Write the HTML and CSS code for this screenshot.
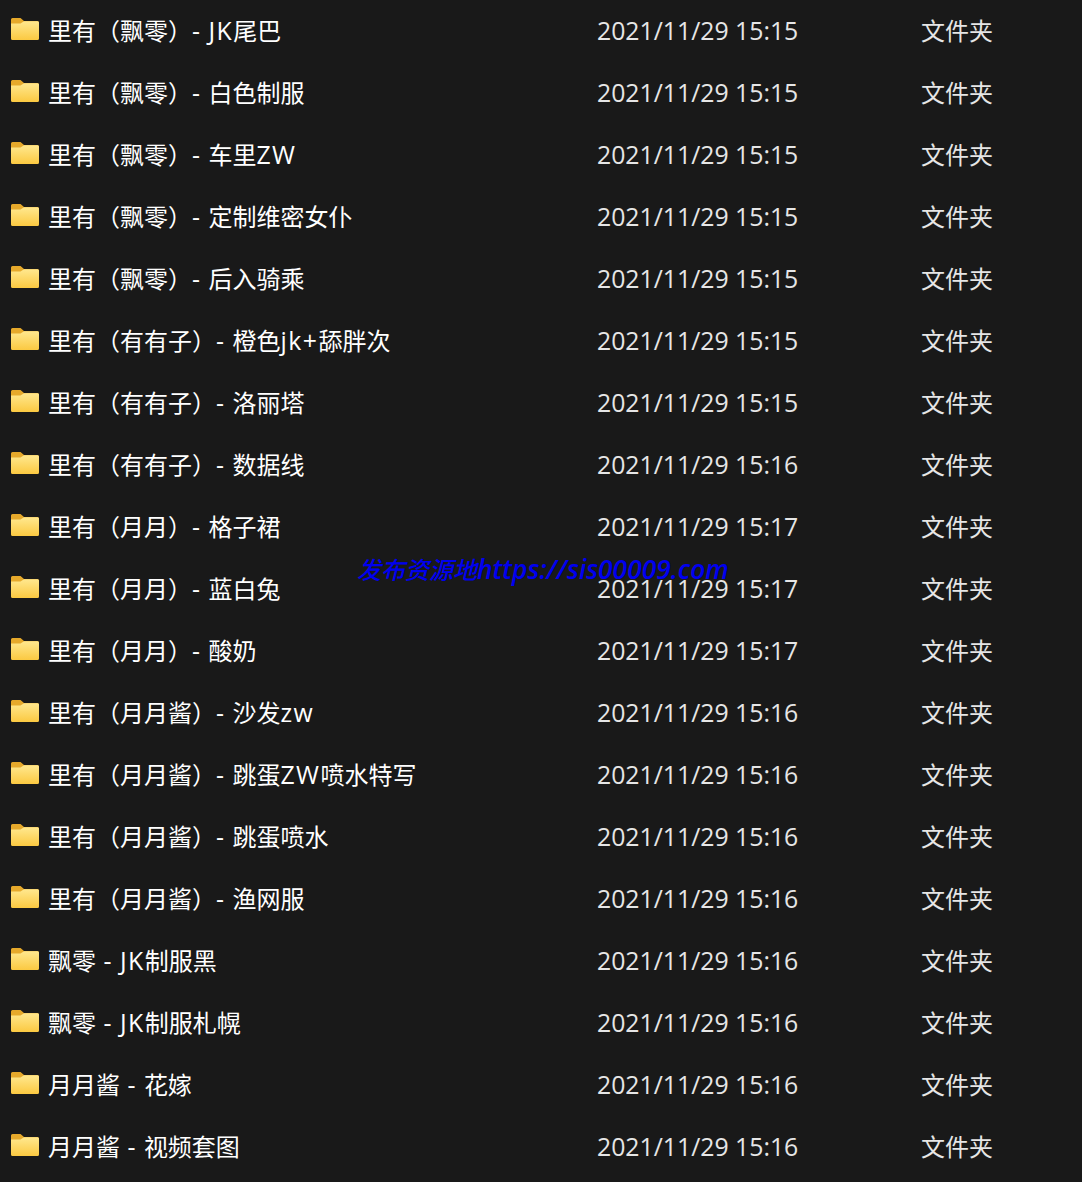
FILE: index.html
```html
<!DOCTYPE html>
<html lang="zh">
<head>
    <meta charset="UTF-8">
    <title>文件夹</title>
    <link rel="stylesheet" href="styles.css">
</head>
<body>
    <svg class="defs" width="0" height="0">
        <defs>
            <linearGradient id="front" x1="0" y1="0" x2="0" y2="1">
                <stop offset="0" stop-color="#ffe88f"/>
                <stop offset="1" stop-color="#fbc941"/>
            </linearGradient>
            <symbol id="folder" viewBox="0 0 28 22">
                <path d="M1.5 0H9.5L13 3H26.5Q28 3 28 4.5V10H0V1.5Q0 0 1.5 0Z" fill="#e6a92b"/>
                <path d="M0 5.5H9.5L13 3.2H26.5Q28 3.2 28 4.7V20.5Q28 22 26.5 22H1.5Q0 22 0 20.5Z" fill="url(#front)"/>
            </symbol>
        </defs>
    </svg>
    <main class="list">
        <div class="row"><span class="name"><svg class="icon"><use href="#folder"/></svg><span>里有（飘零）<span class="lat">- </span><span class="word">JK</span>尾巴</span></span><span class="date">2021/11/29 15:15</span><span class="type">文件夹</span></div>
        <div class="row"><span class="name"><svg class="icon"><use href="#folder"/></svg><span>里有（飘零）<span class="lat">- </span>白色制服</span></span><span class="date">2021/11/29 15:15</span><span class="type">文件夹</span></div>
        <div class="row"><span class="name"><svg class="icon"><use href="#folder"/></svg><span>里有（飘零）<span class="lat">- </span>车里<span class="word">ZW</span></span></span><span class="date">2021/11/29 15:15</span><span class="type">文件夹</span></div>
        <div class="row"><span class="name"><svg class="icon"><use href="#folder"/></svg><span>里有（飘零）<span class="lat">- </span>定制维密女仆</span></span><span class="date">2021/11/29 15:15</span><span class="type">文件夹</span></div>
        <div class="row"><span class="name"><svg class="icon"><use href="#folder"/></svg><span>里有（飘零）<span class="lat">- </span>后入骑乘</span></span><span class="date">2021/11/29 15:15</span><span class="type">文件夹</span></div>
        <div class="row"><span class="name"><svg class="icon"><use href="#folder"/></svg><span>里有（有有子）<span class="lat">- </span>橙色<span class="word">jk+</span>舔胖次</span></span><span class="date">2021/11/29 15:15</span><span class="type">文件夹</span></div>
        <div class="row"><span class="name"><svg class="icon"><use href="#folder"/></svg><span>里有（有有子）<span class="lat">- </span>洛丽塔</span></span><span class="date">2021/11/29 15:15</span><span class="type">文件夹</span></div>
        <div class="row"><span class="name"><svg class="icon"><use href="#folder"/></svg><span>里有（有有子）<span class="lat">- </span>数据线</span></span><span class="date">2021/11/29 15:16</span><span class="type">文件夹</span></div>
        <div class="row"><span class="name"><svg class="icon"><use href="#folder"/></svg><span>里有（月月）<span class="lat">- </span>格子裙</span></span><span class="date">2021/11/29 15:17</span><span class="type">文件夹</span></div>
        <div class="row"><span class="name"><svg class="icon"><use href="#folder"/></svg><span>里有（月月）<span class="lat">- </span>蓝白兔</span></span><span class="date">2021/11/29 15:17</span><span class="type">文件夹</span></div>
        <div class="row"><span class="name"><svg class="icon"><use href="#folder"/></svg><span>里有（月月）<span class="lat">- </span>酸奶</span></span><span class="date">2021/11/29 15:17</span><span class="type">文件夹</span></div>
        <div class="row"><span class="name"><svg class="icon"><use href="#folder"/></svg><span>里有（月月酱）<span class="lat">- </span>沙发<span class="word">zw</span></span></span><span class="date">2021/11/29 15:16</span><span class="type">文件夹</span></div>
        <div class="row"><span class="name"><svg class="icon"><use href="#folder"/></svg><span>里有（月月酱）<span class="lat">- </span>跳蛋<span class="word">ZW</span>喷水特写</span></span><span class="date">2021/11/29 15:16</span><span class="type">文件夹</span></div>
        <div class="row"><span class="name"><svg class="icon"><use href="#folder"/></svg><span>里有（月月酱）<span class="lat">- </span>跳蛋喷水</span></span><span class="date">2021/11/29 15:16</span><span class="type">文件夹</span></div>
        <div class="row"><span class="name"><svg class="icon"><use href="#folder"/></svg><span>里有（月月酱）<span class="lat">- </span>渔网服</span></span><span class="date">2021/11/29 15:16</span><span class="type">文件夹</span></div>
        <div class="row"><span class="name"><svg class="icon"><use href="#folder"/></svg><span>飘零<span class="lat"> - </span><span class="word">JK</span>制服黑</span></span><span class="date">2021/11/29 15:16</span><span class="type">文件夹</span></div>
        <div class="row"><span class="name"><svg class="icon"><use href="#folder"/></svg><span>飘零<span class="lat"> - </span><span class="word">JK</span>制服札幌</span></span><span class="date">2021/11/29 15:16</span><span class="type">文件夹</span></div>
        <div class="row"><span class="name"><svg class="icon"><use href="#folder"/></svg><span>月月酱<span class="lat"> - </span>花嫁</span></span><span class="date">2021/11/29 15:16</span><span class="type">文件夹</span></div>
        <div class="row"><span class="name"><svg class="icon"><use href="#folder"/></svg><span>月月酱<span class="lat"> - </span>视频套图</span></span><span class="date">2021/11/29 15:16</span><span class="type">文件夹</span></div>
    </main>
    <div class="watermark">发布资源地<span class="wm_url">https://sis00009.com</span></div>
</body>
</html>
```

FILE: styles.css
```css
* {
    margin: 0;
    padding: 0;
    box-sizing: border-box;
}
html, body {
    height: 100%;
    overflow: hidden;
}
body {
    position: relative;
    background-color: #191919;
    color: #ffffff;
    font-family: "Open Sans", "Noto Sans CJK SC", sans-serif;
    font-size: 24px;
}
.defs {
    display: block;
    height: 0;
}
.row {
    height: 62px;
    display: grid;
    grid-template-columns: 597px 324px 1fr;
    align-items: center;
}
.name {
    display: flex;
    align-items: center;
    padding-left: 11px;
    white-space: pre;
}
.name > span {
    position: relative;
    top: -2px;
}
.lat {
    font-size: 24.8px;
    letter-spacing: 1px;
}
.word {
    font-size: 24.8px;
    letter-spacing: 1.5px;
}
.icon {
    width: 28px;
    height: 22px;
    margin-right: 9px;
    margin-top: -4px;
    flex-shrink: 0;
}
.date {
    color: #e6e6e6;
    font-size: 24.8px;
    position: relative;
    top: -1px;
}
.type {
    color: #e6e6e6;
    position: relative;
    top: -2px;
}
.watermark {
    position: absolute;
    left: 357px;
    top: 551px;
    color: #0000f0;
    font-size: 24px;
    font-weight: 500;
    font-style: italic;
    white-space: nowrap;
}
.wm_url {
    font-size: 26.4px;
    font-weight: 600;
}
```
